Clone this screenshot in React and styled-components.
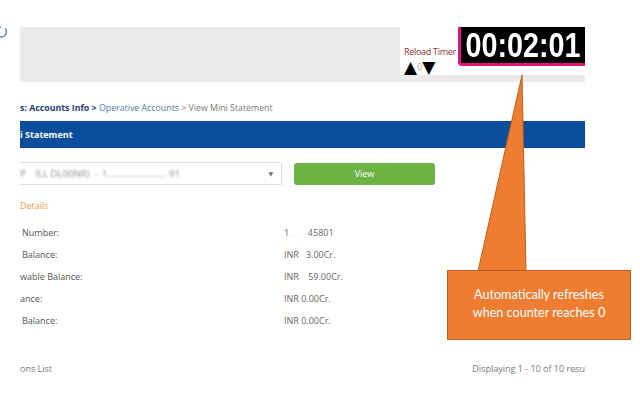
import styled, { createGlobalStyle } from 'styled-components';

const GlobalStyle = createGlobalStyle`
    body {
        margin: 0;
        background: #fff;
        font-family: "Open Sans", "Liberation Sans", sans-serif;
    }
`

const Page = styled.div`
    position: relative;
    width: 640px;
    height: 400px;
    overflow: hidden;
    background: #fff;
`

const Content = styled.div`
    padding: 27px 55px 0 20px;
`

const Header = styled.div`
    height: 55px;
    background: #ebebeb;
    display: flex;
    justify-content: flex-end;
    align-items: flex-start;
`

const TimerArea = styled.div`
    width: 185px;
    height: 48px;
    background: #fff;
    display: flex;
    align-items: flex-start;
`

const ReloadBlock = styled.div`
    display: flex;
    flex-direction: column;
    padding: 19px 0 0 4px;
    width: 54px;
`

const ReloadLabel = styled.span`
    color: #8e3131;
    font-size: 9px;
    letter-spacing: -0.3px;
    white-space: nowrap;
    line-height: 12px;
`

const Arrows = styled.div`
    display: flex;
    align-items: center;
    margin-top: 3px;
    line-height: 12px;
`

const Arrow = styled.span`
    font-family: "DejaVu Sans", sans-serif;
    font-size: 17px;
    color: #000;
    line-height: 12px;
`

const ArrowValue = styled.span`
    font-size: 9px;
    color: #b0b0b0;
`

const TimerBox = styled.div`
    margin-left: auto;
    width: 124px;
    height: 36px;
    background: #000;
    border-left: 3px solid #e3157c;
    border-bottom: 3px solid #e3157c;
    border-bottom-left-radius: 4px;
    display: flex;
    align-items: center;
    justify-content: center;
`

const TimerText = styled.span`
    font-family: "Liberation Sans", Arial, sans-serif;
    font-weight: bold;
    font-size: 35px;
    color: #fff;
    transform: scaleX(0.82);
    margin: 0 -13px;
    line-height: 36px;
    white-space: nowrap;
`

const Breadcrumb = styled.div`
    margin-top: 19px;
    font-size: 8.8px;
    line-height: 14px;
    color: #7a7a7a;
    white-space: nowrap;
`

const Crumb = styled.span`
    color: ${({ strong }) => (strong ? '#1d3e70' : '#4d7bb4')};
    font-weight: ${({ strong }) => (strong ? 700 : 400)};
`

const TitleBar = styled.div`
    margin-top: 6px;
    height: 27px;
    background: #0a4d9b;
    color: #fff;
    font-size: 9px;
    font-weight: 700;
    display: flex;
    align-items: center;
`

const FormRow = styled.div`
    margin-top: 14px;
    display: flex;
    align-items: center;
    gap: 12px;
`

const SelectBox = styled.div`
    width: 253px;
    height: 21px;
    border: 1px solid #dcdcdc;
    border-left: none;
    border-radius: 0 2px 2px 0;
    display: flex;
    align-items: center;
    padding-right: 8px;
    justify-content: space-between;
    font-size: 9.5px;
`

const Blur = styled.span`
    filter: blur(1.2px);
    color: ${({ light }) => (light ? '#c4c4c4' : '#8c8c8c')};
    white-space: pre;
`

const Caret = styled.span`
    font-family: "DejaVu Sans", sans-serif;
    font-size: 6px;
    color: #777;
`

const ViewButton = styled.button`
    width: 141px;
    height: 22px;
    border: none;
    border-radius: 3px;
    background: #6cb344;
    color: #fff;
    font-family: "Open Sans", sans-serif;
    font-size: 9px;
    padding: 0;
`

const SectionTitle = styled.div`
    margin-top: 14px;
    color: #f3a043;
    font-size: 9px;
    line-height: 14px;
`

const DetailList = styled.div`
    margin-top: 9px;
    display: flex;
    flex-direction: column;
`

const DetailRow = styled.div`
    height: 21.8px;
    display: grid;
    grid-template-columns: 264px 1fr;
    align-items: center;
    font-size: 9px;
    color: #555;
`

const Label = styled.span`
    padding-left: ${({ indent }) => indent}px;
    white-space: nowrap;
`

const Value = styled.span`
    color: #666;
    white-space: pre;
`

const Footer = styled.div`
    margin-top: 31px;
    display: flex;
    justify-content: space-between;
    font-size: 9px;
    color: #777;
`

const EdgeIcon = styled.svg`
    position: absolute;
    left: -6px;
    top: 25px;
`

const CalloutTail = styled.svg`
    position: absolute;
    left: 476px;
    top: 74px;
`

const Callout = styled.div`
    position: absolute;
    left: 447px;
    top: 270px;
    width: 184px;
    height: 70px;
    background: #ee7d31;
    border: 1px solid #b9611f;
    color: #fff;
    font-family: Lato, "Open Sans", sans-serif;
    font-size: 12.6px;
    line-height: 18px;
    text-align: center;
    display: flex;
    align-items: center;
    justify-content: center;
    padding-bottom: 2px;
    box-sizing: border-box;
`

const details = [
    { label: 'Number:', indent: 2, value: <>1<Blur light>{'\u2026     '}</Blur>45801</> },
    { label: 'Balance:', indent: 2, value: <>INR <Blur light>{'  '}</Blur>3.00Cr.</> },
    { label: 'wable Balance:', indent: 0, value: <>INR <Blur light>{'   '}</Blur>59.00Cr.</> },
    { label: 'ance:', indent: 0, value: 'INR 0.00Cr.' },
    { label: 'Balance:', indent: 2, value: 'INR 0.00Cr.' },
]

const App = () => {
    return <Page>
        <GlobalStyle />
        <EdgeIcon width="14" height="14" viewBox="0 0 14 14">
            <path d="M11 3.5 A5 5 0 1 1 7 2" fill="none" stroke="#5b7fc0" strokeWidth="1.4" />
        </EdgeIcon>
        <Content>
            <Header>
                <TimerArea>
                    <ReloadBlock>
                        <ReloadLabel>Reload Timer</ReloadLabel>
                        <Arrows>
                            <Arrow>▲</Arrow>
                            <ArrowValue>0</ArrowValue>
                            <Arrow>▼</Arrow>
                        </Arrows>
                    </ReloadBlock>
                    <TimerBox>
                        <TimerText>00:02:01</TimerText>
                    </TimerBox>
                </TimerArea>
            </Header>
            <Breadcrumb>
                <Crumb strong>s: Accounts Info &gt;</Crumb> <Crumb>Operative Accounts</Crumb> &gt; View Mini Statement
            </Breadcrumb>
            <TitleBar>i Statement</TitleBar>
            <FormRow>
                <SelectBox>
                    <Blur>{'P    ILL DL0(INR)  -  1\u2026\u2026\u2026\u2026\u2026\u2026\u2026\u2026 91'}</Blur>
                    <Caret>▼</Caret>
                </SelectBox>
                <ViewButton>View</ViewButton>
            </FormRow>
            <SectionTitle>Details</SectionTitle>
            <DetailList>
                {details.map((d, i) => (
                    <DetailRow key={i}>
                        <Label indent={d.indent}>{d.label}</Label>
                        <Value>{d.value}</Value>
                    </DetailRow>
                ))}
            </DetailList>
            <Footer>
                <span>ons List</span>
                <span>Displaying 1 - 10 of 10 resu</span>
            </Footer>
        </Content>
        <CalloutTail width="54" height="200" viewBox="0 0 54 200">
            <polygon points="46,1 2,197 50,197" fill="#ee7d31" stroke="#b9611f" strokeWidth="1" />
        </CalloutTail>
        <Callout>Automatically refreshes<br />when counter reaches 0</Callout>
    </Page>
}

export default App;
